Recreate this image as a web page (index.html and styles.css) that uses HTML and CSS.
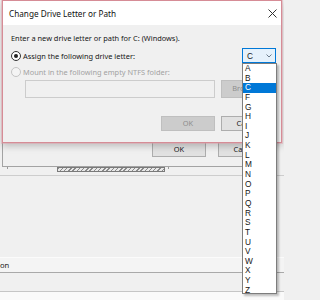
FILE: index.html
```html
<!DOCTYPE html>
<html>
<head>
<meta charset="utf-8">
<link rel="stylesheet" href="styles.css">
</head>
<body>
<div class="screen">
  <div class="back-dialog">
    <div class="back-buttons">
      <div class="btn">OK</div>
      <div class="btn">Cancel</div>
    </div>
  </div>
  <div class="disk-strip">
    <span class="tick tick-left"></span>
    <div class="hatch"></div>
    <span class="tick"></span>
  </div>
  <div class="main-gap"></div>
  <div class="row-header">on</div>
  <div class="row-empty"></div>
  <div class="bottom"></div>

  <div class="dialog">
    <div class="titlebar">
      <span class="title">Change Drive Letter or Path</span>
      <svg class="close" width="9" height="9" viewBox="0 0 9 9"><path d="M0.5 0.5 L8.5 8.5 M8.5 0.5 L0.5 8.5" stroke="#333" stroke-width="1" fill="none"/></svg>
    </div>
    <div class="dlg-body">
      <div class="intro">Enter a new drive letter or path for C: (Windows).</div>
      <div class="opt-row">
        <div class="radio-label"><span class="radio checked"></span>Assign the following drive letter:</div>
        <div class="combo-wrap">
          <div class="combo">
            <span>C</span>
            <svg width="6" height="4" viewBox="0 0 6 4"><path d="M0.5 0.5 L3 3 L5.5 0.5" stroke="#6a7a8a" stroke-width="1" fill="none"/></svg>
          </div>
          <ul class="list">
            <li>A</li><li>B</li><li class="sel">C</li><li>F</li><li>G</li><li>H</li><li>I</li><li>J</li><li>K</li><li>L</li><li>M</li><li>N</li><li>O</li><li>P</li><li>Q</li><li>R</li><li>S</li><li>T</li><li>U</li><li>V</li><li>W</li><li>X</li><li>Y</li><li>Z</li>
          </ul>
        </div>
      </div>
      <div class="radio-label disabled"><span class="radio"></span>Mount in the following empty NTFS folder:</div>
      <div class="path-row">
        <div class="field"></div>
        <div class="btn btn-disabled browse">Browse...</div>
      </div>
      <div class="action-row">
        <div class="btn btn-disabled">OK</div>
        <div class="btn">Cancel</div>
      </div>
    </div>
  </div>
</div>
</body>
</html>
```

FILE: styles.css
```css
* { box-sizing: border-box; margin: 0; padding: 0; }
html, body { width: 284px; height: 300px; overflow: hidden; }
body {
  background: #f0f0f0;
  font-family: "Noto Sans", "Open Sans", sans-serif;
  font-size: 7.4px;
  color: #161616;
}
.screen { position: relative; width: 284px; height: 300px; display: flex; flex-direction: column; }

.back-dialog {
  margin-left: 2px;
  width: 274px;
  height: 167px;
  flex: none;
  border: 1px solid #a3a3a3;
  border-top: none;
  background: #f0f0f0;
  padding: 142px 0 0 149px;
}
.back-buttons { display: flex; gap: 12px; }

.btn {
  height: 15px;
  width: 54px;
  flex: none;
  border: 1px solid #adadad;
  background: #e1e1e1;
  display: flex;
  align-items: center;
  justify-content: center;
  font-size: 7.4px;
  line-height: 1;
  white-space: nowrap;
  overflow: hidden;
}
.btn-disabled { background: #cccccc; border-color: #bfbfbf; color: #8c8c8c; }

.disk-strip { height: 8px; flex: none; display: flex; align-items: flex-start; }
.tick { width: 1px; height: 2px; background: #9a9a9a; }
.tick-left { margin-left: 7px; }
.hatch {
  margin-left: 49px;
  width: 108px;
  height: 5px;
  border: 1px solid #7a7a7a;
  background: repeating-linear-gradient(135deg, #8a8a8a 0 1px, #e8e8e8 1px 3px);
  margin-right: 3px;
}
.main-gap { height: 82px; flex: none; border-top: 1px solid #cdcdcd; }
.row-header {
  height: 16px;
  flex: none;
  border-top: 1px solid #fbfbfb;
  border-bottom: 1px solid #a9a9a9;
  background: #f4f4f4;
  font-size: 7.6px;
  line-height: 14px;
}
.row-empty { height: 19px; flex: none; border-bottom: 1px solid #c6c6c6; background: #f0f0f0; }
.bottom { flex: 1; background: #fafafa; }

.dialog {
  position: absolute;
  left: 2px;
  top: 0;
  width: 280px;
  height: 143px;
  border: 1px solid #d68c96;
  background: #f0f0f0;
  box-shadow: 0 0 0 1px rgba(226, 160, 170, 0.45), 0 3px 7px rgba(0,0,0,0.22);
}
.titlebar {
  height: 24px;
  background: #fff;
  display: flex;
  align-items: center;
  justify-content: space-between;
  padding: 1px 4px 0 6px;
}
.title { font-size: 8.2px; color: #111; }
.dlg-body { padding: 7px 0 0 8px; display: flex; flex-direction: column; }
.intro { height: 12px; line-height: 12px; white-space: nowrap; }

.opt-row {
  margin-top: 4px;
  height: 15px;
  display: flex;
  align-items: center;
  justify-content: space-between;
  margin-right: 5px;
}
.radio-label { display: flex; align-items: center; gap: 2px; height: 12px; white-space: nowrap; }
.radio-label.disabled { margin-top: 3px; color: #a2a2a2; }
.radio {
  width: 10px;
  height: 10px;
  border-radius: 50%;
  border: 1px solid #333;
  background: #fff;
  position: relative;
}
.radio.checked::after {
  content: "";
  position: absolute;
  left: 2px; top: 2px;
  width: 4px; height: 4px;
  border-radius: 50%;
  background: #222;
}
.disabled .radio { border-color: #c4c4c4; background: #f4f4f4; }

.combo-wrap { position: relative; }
.combo {
  width: 34px;
  height: 15px;
  border: 1px solid #0078d7;
  background: #e5f1fb;
  display: flex;
  align-items: center;
  justify-content: space-between;
  padding: 0 3px 0 4px;
  font-family: "Liberation Sans", Arial, sans-serif;
  font-size: 8.3px;
}
.list {
  position: absolute;
  left: 0;
  top: 15px;
  width: 35px;
  height: 231px;
  list-style: none;
  background: #fff;
  border: 1px solid #7d7d7d;
  box-shadow: 2px 2px 2px rgba(0,0,0,0.25);
  z-index: 5;
  font-family: "Liberation Sans", Arial, sans-serif;
  font-size: 8.3px;
}
.list li { height: 9.65px; line-height: 9.65px; padding-left: 2px; }
.list li.sel { background: #0078d7; color: #fff; }

.path-row { margin-top: 2px; display: flex; gap: 6px; height: 18px; }
.field { margin-left: 14px; width: 190px; height: 18px; border: 1px solid #cccccc; background: #f0f0f0; }
.browse { height: 18px; }

.action-row { margin-top: 18px; display: flex; justify-content: flex-end; gap: 6px; margin-right: 6px; }
```
